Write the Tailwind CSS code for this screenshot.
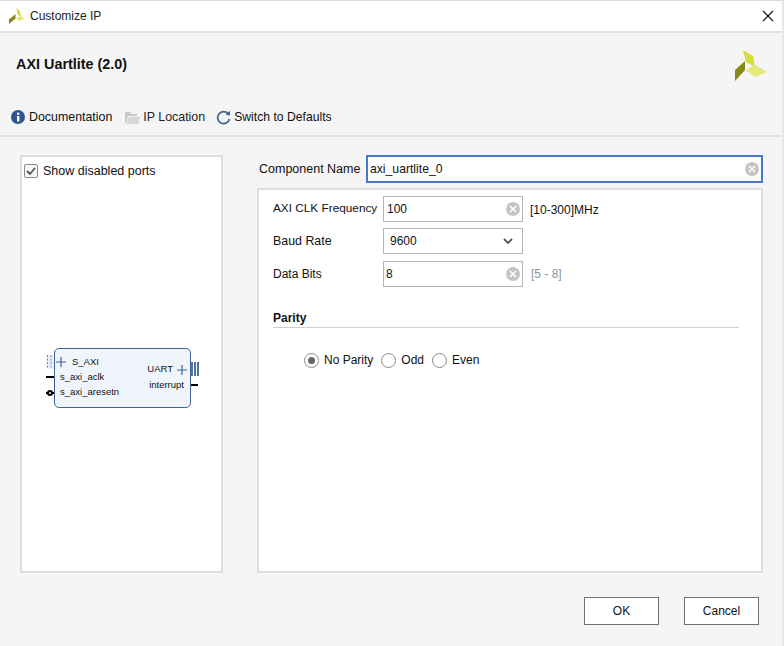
<!DOCTYPE html>
<html>
<head>
<meta charset="utf-8">
<script src="https://cdn.jsdelivr.net/npm/@tailwindcss/browser@4"></script>
<title>Customize IP</title>
</head>
<body class="bg-white">
<div class="w-[784px] h-[646px] overflow-hidden flex flex-col bg-[#f5f5f5] text-[12px] text-[#111] font-['Liberation_Sans',Arial,sans-serif] border-t border-[#dcdcdc] border-r-2 border-r-[#e6e6e6]">

  <!-- title bar -->
  <div class="h-[32px] shrink-0 bg-white border-b-2 border-[#e2e2e2] flex items-center pl-[9px] pr-[6px]">
    <svg width="16" height="16" viewBox="0 0 32 32" class="mr-[5px]">
      <polygon points="15,0 22,6 24,18 17,13" fill="#d6dc3a"/>
      <polygon points="0,23 13,12 13,21 0,32" fill="#87881a"/>
      <polygon points="14,19 24,16 32,22 20,26" fill="#e4e97a"/>
    </svg>
    <span class="text-[12px] text-[#222]">Customize IP</span>
    <svg width="12" height="12" viewBox="0 0 12 12" class="ml-auto mr-[2px]"><path d="M1 1L11 11M11 1L1 11" stroke="#111" stroke-width="1.1"/></svg>
  </div>

  <!-- header -->
  <div class="h-[104px] shrink-0 border-b-2 border-[#e2e2e2] flex flex-col px-[11px]">
    <div class="flex items-start justify-between h-[70px] pt-[15px]">
      <span class="pl-[5px] text-[14.4px] font-bold leading-[32px]">AXI Uartlite (2.0)</span>
      <svg width="32" height="32" viewBox="0 0 32 32" class="mr-[4px] mt-[1px]">
        <polygon points="8,1 18,7 20,18 11,13" fill="#d6dc3a"/>
        <polygon points="0,21 10,12 10,21 0,32" fill="#87881a"/>
        <polygon points="11,21 20,16 32,23 20,28" fill="#e4e97a"/>
      </svg>
    </div>
    <div class="flex items-center h-[26px] pt-[2px] text-[12.4px]">
      <svg width="14" height="14" viewBox="0 0 14 14" class="mr-[4px]"><circle cx="7" cy="7" r="7" fill="#2f5590"/><rect x="6" y="6" width="2.4" height="5.5" fill="#fff"/><rect x="6" y="2.6" width="2.4" height="2.2" fill="#fff"/></svg>
      <span>Documentation</span>
      <svg width="15" height="13" viewBox="0 0 15 13" class="ml-[13px] mr-[3px]"><path d="M0 1h5l1 2h6v2H3L1 12H0z" fill="#c9c9c9"/><path d="M3.500 6H15l-2 7H1.500z" fill="#d6d6d6"/></svg>
      <span class="text-[#222]">IP Location</span>
      <svg width="15" height="15" viewBox="0 0 15 15" class="ml-[11px] mr-[3px]"><path d="M12.500 4A6 6 0 1 0 13.500 9" fill="none" stroke="#3f6494" stroke-width="1.700"/><path d="M9.500 4.800L14 5.500V0.800z" fill="#3f6494"/></svg>
      <span class="text-[12.2px]">Switch to Defaults</span>
    </div>
  </div>

  <!-- body -->
  <div class="flex-1 flex pl-[20px] pr-[19px] pt-[18px]">
    <!-- symbol panel -->
    <div class="w-[203px] h-[418px] bg-white border-2 border-[#dedede] shrink-0 flex flex-col">
      <label class="flex items-center h-[26px] pl-[2px] pt-[1px]">
        <span class="w-[14px] h-[14px] border border-[#8a8a8a] rounded-[2px] bg-[#f6f6f6] flex items-center justify-center mr-[5px]">
          <svg width="10" height="10" viewBox="0 0 10 10"><path d="M1 5l3 3 5-6" fill="none" stroke="#555" stroke-width="1.800"/></svg>
        </span>
        <span class="text-[12.5px] mt-[1px]">Show disabled ports</span>
      </label>
      <div class="relative flex-1">
        <div class="absolute left-[32px] top-[165px] w-[137px] h-[60px] rounded-[5px] border border-[#3f6494] bg-[#f0f5fc] text-[9.5px] leading-none">
          <span class="absolute left-[17px] top-[8px]">S_AXI</span>
          <span class="absolute left-[5px] top-[23px]">s_axi_aclk</span>
          <span class="absolute left-[5px] top-[38px]">s_axi_aresetn</span>
          <span class="absolute right-[17px] top-[15px]">UART</span>
          <span class="absolute right-[6px] top-[31px]">interrupt</span>
          <svg width="10" height="10" viewBox="0 0 10 10" class="absolute left-[1px] top-[8px]"><path d="M5 0v10M0 5h10" stroke="#3f6494" stroke-width="1.200"/></svg>
          <svg width="10" height="10" viewBox="0 0 10 10" class="absolute right-[3px] top-[16px]"><path d="M5 0v10M0 5h10" stroke="#3f6494" stroke-width="1.200"/></svg>
        </div>
        <!-- pins -->
        <svg width="8" height="14" viewBox="0 0 8 14" class="absolute left-[24px] top-[172px]"><rect width="8" height="14" fill="#e8f0fa"/><path d="M1.500 0v14M5 0v14" stroke="#6f8fb8" stroke-width="1" stroke-dasharray="2 1.500"/></svg>
        <div class="absolute left-[24px] top-[193px] w-[8px] h-[2px] bg-black"></div>
        <div class="absolute left-[24px] top-[209px] w-[8px] h-[2px] bg-black"></div>
        <div class="absolute left-[25px] top-[207px] w-[6px] h-[6px] rounded-full border-2 border-black bg-white"></div>
        <svg width="8" height="14" viewBox="0 0 8 14" class="absolute left-[169px] top-[179px]"><path d="M1 0v14M4 0v14M7 0v14" stroke="#3f6494" stroke-width="1.800"/></svg>
        <div class="absolute left-[169px] top-[201px] w-[7px] h-[2px] bg-black"></div>
      </div>
    </div>

    <!-- config column -->
    <div class="flex-1 ml-[34px] flex flex-col">
      <div class="flex items-center h-[28px] mb-[5px]">
        <span class="w-[109px] pl-[2px] shrink-0 text-[12.5px]">Component Name</span>
        <div class="flex-1 h-[28px] bg-white border-2 border-[#4a78c8] flex items-center pl-[2px] pr-[2px]">
          <span class="flex-1 text-[12.2px]">axi_uartlite_0</span>
          <svg width="14" height="14" viewBox="0 0 14 14"><circle cx="7" cy="7" r="7" fill="#c4c4c4"/><path d="M4 4l6 6M10 4l-6 6" stroke="#fff" stroke-width="1.600"/></svg>
        </div>
      </div>
      <div class="h-[385px] bg-white border-2 border-[#dedede] pl-[14px] pr-[22px] pt-[6px]">
        <div class="flex items-center h-[26px] mb-[6px]">
          <span class="w-[110px] shrink-0 text-[11.8px]">AXI CLK Frequency</span>
          <div class="w-[140px] h-[26px] border border-[#b5b5b5] flex items-center pl-[3px] pr-[2px]">
            <span class="flex-1">100</span>
            <svg width="14" height="14" viewBox="0 0 14 14"><circle cx="7" cy="7" r="7" fill="#c4c4c4"/><path d="M4 4l6 6M10 4l-6 6" stroke="#fff" stroke-width="1.600"/></svg>
          </div>
          <span class="ml-[7px] mt-[2px]">[10-300]MHz</span>
        </div>
        <div class="flex items-center h-[26px] mb-[7px]">
          <span class="w-[110px] shrink-0 text-[12.4px]">Baud Rate</span>
          <div class="w-[140px] h-[26px] border border-[#b5b5b5] flex items-center pl-[6px] pr-[9px]">
            <span class="flex-1">9600</span>
            <svg width="10" height="7" viewBox="0 0 10 7"><path d="M1 1l4 4 4-4" fill="none" stroke="#555" stroke-width="1.800"/></svg>
          </div>
        </div>
        <div class="flex items-center h-[26px]">
          <span class="w-[110px] shrink-0">Data Bits</span>
          <div class="w-[140px] h-[26px] border border-[#b5b5b5] flex items-center pl-[2px] pr-[2px]">
            <span class="flex-1">8</span>
            <svg width="14" height="14" viewBox="0 0 14 14"><circle cx="7" cy="7" r="7" fill="#c4c4c4"/><path d="M4 4l6 6M10 4l-6 6" stroke="#fff" stroke-width="1.600"/></svg>
          </div>
          <span class="ml-[8px] text-[#8a94a0]">[5 - 8]</span>
        </div>
        <div class="mt-[24px] h-[17px] border-b border-[#cfcfcf] font-bold leading-[15px]">Parity</div>
        <div class="flex items-center mt-[24px] pl-[31px] h-[16px]">
          <span class="w-[15px] h-[15px] rounded-full border border-[#8a8a8a] flex items-center justify-center mr-[5px]"><span class="w-[7px] h-[7px] rounded-full bg-[#666]"></span></span>
          <span class="mr-[8px]">No Parity</span>
          <span class="w-[15px] h-[15px] rounded-full border border-[#8a8a8a] mr-[5px]"></span>
          <span class="mr-[8px]">Odd</span>
          <span class="w-[15px] h-[15px] rounded-full border border-[#8a8a8a] mr-[5px]"></span>
          <span>Even</span>
        </div>
      </div>
    </div>
  </div>

  <!-- footer -->
  <div class="h-[72px] shrink-0 flex justify-end gap-[25px] pr-[23px] pt-[23px]">
    <button class="w-[75px] h-[28px] bg-white border border-[#707070] text-[12px]">OK</button>
    <button class="w-[75px] h-[28px] bg-white border border-[#707070] text-[12px]">Cancel</button>
  </div>
</div>
</body>
</html>
